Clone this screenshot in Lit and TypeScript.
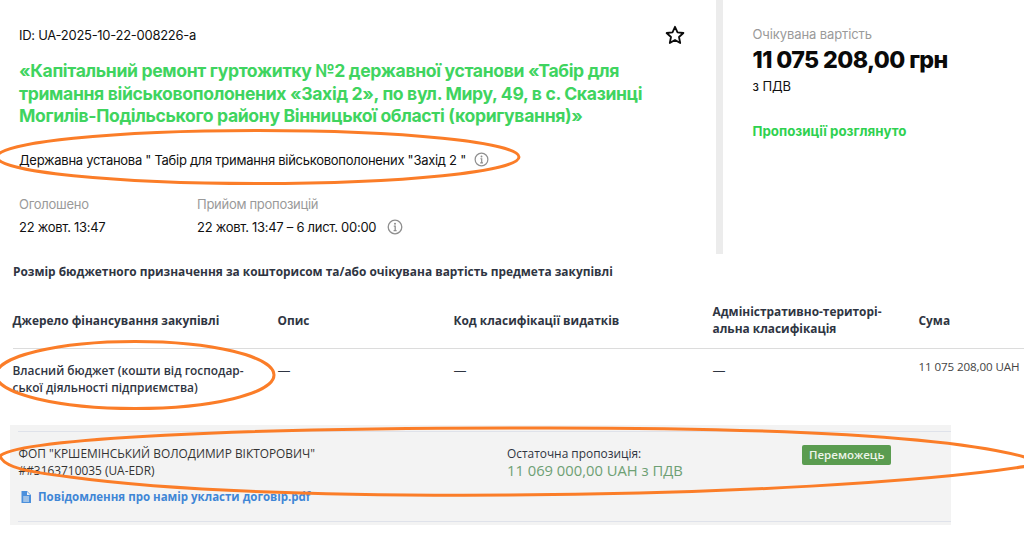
import { LitElement, html, css, svg } from "lit";
import { customElement } from "lit/decorators.js";

const info = (s: number) => html`<svg class="info" width=${s} height=${s} viewBox="0 0 16 16" fill="none" stroke="#8f8f8f"><circle cx="8" cy="8" r="6.8" stroke-width="1.3"/><path d="M6.8 7.2H8.2V11.6M6.6 11.6H9.6" stroke-width="1.3"/><circle cx="8" cy="4.8" r="1" fill="#8f8f8f" stroke="none"/></svg>`;

@customElement("app-root")
export class AppRoot extends LitElement {
  static styles = css`
    :host { display: block; position: relative; width: 1024px; height: 547px; overflow: hidden; background: #fff; font-family: "Inter", "Liberation Sans", sans-serif; color: #111; }
    .top { display: flex; height: 254px; }
    .main { width: 716px; box-sizing: border-box; padding: 24px 31px 0 19px; font-size: 13px; letter-spacing: -0.28px; }
    .idrow { display: flex; justify-content: space-between; align-items: center; height: 21px; }
    h1 { margin: 15px 0 0; font-size: 17.6px; line-height: 22.6px; font-weight: 700; color: #3fd45f; letter-spacing: -0.35px; }
    .org { display: flex; align-items: center; gap: 8px; margin-top: 22px; height: 20px; }
    .dates { display: flex; margin-top: 25px; }
    .dates > div:first-child { width: 178px; }
    .lbl { color: #9a9a9a; line-height: 18px; }
    .val { display: flex; align-items: center; gap: 11px; margin-top: 4px; line-height: 20px; }
    .side { flex: 1; border-left: 7px solid #ececec; padding: 25px 0 0 29.5px; letter-spacing: -0.1px; font-size: 13px; }
    .amt { font-size: 23.2px; font-weight: 800; line-height: 30px; margin-top: 2px; letter-spacing: -0.6px; color: #0a0a0a; }
    .vat { line-height: 20px; margin-top: 1px; }
    .status { margin-top: 26px; font-size: 13.3px; font-weight: 700; color: #2fd150; letter-spacing: 0; line-height: 18px; }
    .lower { font-family: "Open Sans", sans-serif; color: #2f3542; font-size: 12px; }
    .cap { padding: 9px 0 0 13px; font-weight: 700; line-height: 16px; font-size: 11.9px; }
    .table { display: grid; grid-template-columns: 265px 176px 259px 206px 1fr; margin: 17px 0 0 12.5px; }
    .th { height: 53px; box-sizing: border-box; padding-bottom: 4px; border-bottom: 1px solid #dcdcdc; display: flex; align-items: center; font-weight: 700; font-size: 11.9px; line-height: 17px; }
    .td { height: 61px; padding-top: 13px; box-sizing: border-box; font-weight: 600; font-size: 11.9px; line-height: 16.5px; }
    .td.plain { font-weight: 400; font-size: 13px; }
    .td.sum { font-weight: 400; padding-top: 10px; font-size: 11.6px; color: #444; white-space: nowrap; letter-spacing: -0.1px; }
    .bid { width: 941px; height: 100px; margin: 15px 0 0 10px; background: #f3f3f3; box-sizing: border-box; padding: 6px 0 3px 8px; }
    .bidin { height: 100%; border-top: 1px solid #dfe2ea; border-bottom: 1px solid #dfe2ea; display: grid; grid-template-columns: 489px 295px 1fr; padding-top: 13px; box-sizing: border-box; }
    .who { line-height: 16.5px; font-size: 11.9px; color: #333; margin-left: 0.5px; }
    .link { display: flex; align-items: center; gap: 6px; margin-top: 11px; margin-left: 2px; color: #3f86d6; font-weight: 700; font-size: 11.5px; line-height: 16px; }
    .offer { font-size: 11.9px; line-height: 14px; padding-top: 1px; }
    .offer b { display: block; font-weight: 400; font-size: 14.75px; line-height: 18px; color: #6ea074; margin-top: 1px; }
    .badge { align-self: start; justify-self: start; background: #5a9c50; color: #eef5ea; font-weight: 600; font-size: 11.5px; padding: 2px 7px; border-radius: 2px; line-height: 16px; }
    .marks { position: absolute; left: 0; top: 0; pointer-events: none; }
  `;

  render() {
    return html`
      <div class="top">
        <div class="main">
          <div class="idrow">
            <span>ID: UA-2025-10-22-008226-a</span>
            <svg width="20" height="20" viewBox="0 0 20 20" fill="none" stroke="#0a0a0a" stroke-width="1.8" stroke-linejoin="round"><path d="M10 1.8 12.5 7.3 18.4 8 14 12 15.2 18 10 15 4.8 18 6 12 1.6 8 7.5 7.3Z"/></svg>
          </div>
          <h1>«Капітальний ремонт гуртожитку №2 державної установи «Табір для тримання військовополонених «Захід 2», по вул. Миру, 49, в с. Сказинці Могилів-Подільського району Вінницької області (коригування)»</h1>
          <div class="org"><span>Державна установа " Табір для тримання військовополонених "Захід 2 "</span>${info(15)}</div>
          <div class="dates">
            <div><div class="lbl">Оголошено</div><div class="val">22 жовт. 13:47</div></div>
            <div><div class="lbl">Прийом пропозицій</div><div class="val">22 жовт. 13:47 – 6 лист. 00:00 ${info(16)}</div></div>
          </div>
        </div>
        <div class="side">
          <div class="lbl">Очікувана вартість</div>
          <div class="amt">11 075 208,00 грн</div>
          <div class="vat">з ПДВ</div>
          <div class="status">Пропозиції розглянуто</div>
        </div>
      </div>
      <div class="lower">
        <div class="cap">Розмір бюджетного призначення за кошторисом та/або очікувана вартість предмета закупівлі</div>
        <div class="table">
          <div class="th">Джерело фінансування закупівлі</div>
          <div class="th">Опис</div>
          <div class="th">Код класифікації видатків</div>
          <div class="th">Адміністративно-територі-<br />альна класифікація</div>
          <div class="th">Сума</div>
          <div class="td">Власний бюджет (кошти від господар-<br />ської діяльності підприємства)</div>
          <div class="td plain">—</div>
          <div class="td plain">—</div>
          <div class="td plain">—</div>
          <div class="td sum">11 075 208,00 UAH</div>
        </div>
        <div class="bid">
          <div class="bidin">
            <div>
              <div class="who">ФОП "КРШЕМІНСЬКИЙ ВОЛОДИМИР ВІКТОРОВИЧ"<br />##3163710035 (UA-EDR)</div>
              <div class="link">
                <svg width="12" height="12" viewBox="0 0 12 12"><path fill="#4a8fdc" fill-rule="evenodd" d="M1.5 0H7L11 4V12H1.5ZM3.2 5.6V6.6H9V5.6ZM3.2 7.6V8.6H9V7.6ZM3.2 9.5V10.4H9V9.5ZM7 .8V4H10.2Z"/></svg>
                Повідомлення про намір укласти договір.pdf
              </div>
            </div>
            <div class="offer">Остаточна пропозиція:<b>11 069 000,00 UAH з ПДВ</b></div>
            <div class="badge">Переможець</div>
          </div>
        </div>
      </div>
      <svg class="marks" width="1024" height="547" fill="none" stroke="#fb7d28" stroke-width="3">
        ${svg`<ellipse cx="258" cy="157" rx="261" ry="26.5"/>
        <ellipse cx="135" cy="375" rx="139" ry="33.5"/>
        <path d="M1028 458C950 435 760 427 510 428 250 428 20 438 0 456 4 468 30 472 70 477 180 492 340 496 510 495 720 494 930 482 1028 466"/>`}
      </svg>
    `;
  }
}
